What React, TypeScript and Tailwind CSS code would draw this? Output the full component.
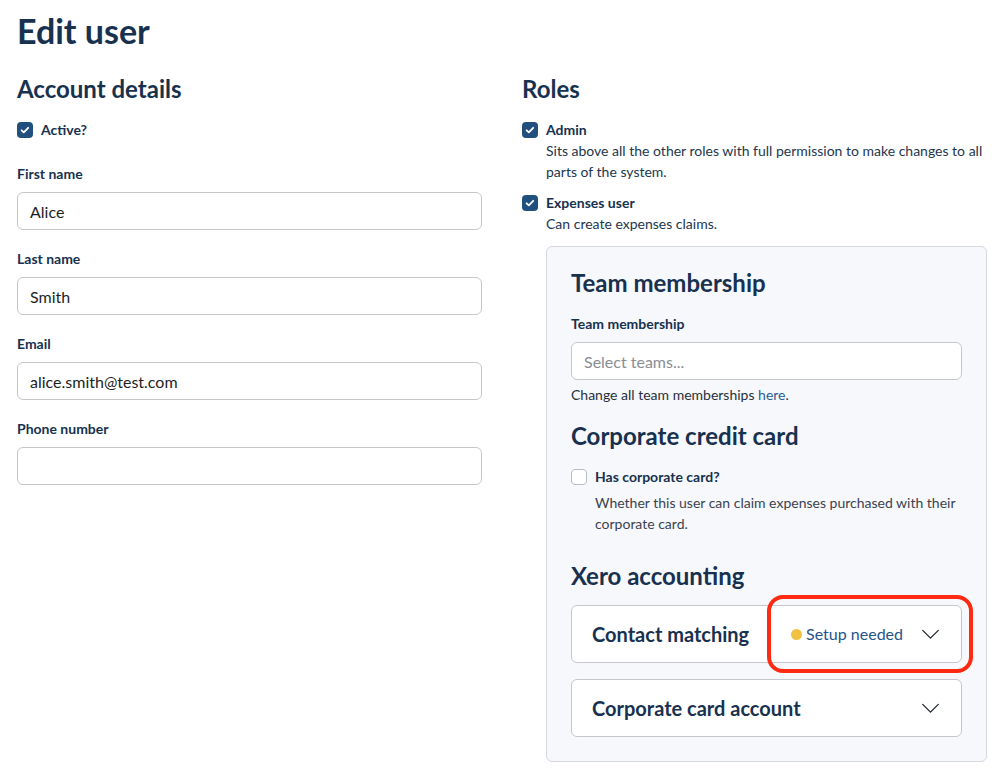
import React from "react";

function Check({ checked }: { checked: boolean }) {
  if (!checked) {
    return <span className="block h-4 w-4 shrink-0 rounded-[4px] border border-[#b9bcc2] bg-white" />;
  }
  return (
    <span className="flex h-4 w-4 shrink-0 items-center justify-center rounded-[4px] bg-[#22507e]">
      <svg viewBox="0 0 16 16" className="h-4 w-4" fill="none">
        <path d="M4.6 8.3l2.2 2.1 4.4-4.6" stroke="white" strokeWidth="1.8" strokeLinecap="round" strokeLinejoin="round" />
      </svg>
    </span>
  );
}

function Chevron() {
  return (
    <svg viewBox="0 0 20 12" className="h-[11px] w-[19px]" fill="none">
      <path d="M1.5 1.5l8.5 8.5 8.5-8.5" stroke="#1f2630" strokeWidth="1.4" strokeLinecap="round" strokeLinejoin="round" />
    </svg>
  );
}

function Field({ label, value }: { label: string; value?: string }) {
  return (
    <div>
      <label className="block text-[14px] font-bold leading-5 text-[#17314f]">{label}</label>
      <input
        defaultValue={value}
        className="mt-2 block h-[38px] w-full rounded-md border border-[#c5c7cb] bg-white px-3 text-[16px] text-[#1c1f24] outline-none"
      />
    </div>
  );
}

export default function App() {
  return (
    <div className="min-h-[776px] bg-white px-[17px] pt-[11px] text-[#17314f]" style={{ fontFamily: "Lato, 'Open Sans', sans-serif" }}>
      <h1 className="text-[34px] font-bold leading-10">Edit user</h1>
      <div className="mt-[23px] grid grid-cols-[465px_465px] gap-x-10">
        <div>
          <h2 className="text-[24px] font-bold leading-[30px]">Account details</h2>
          <label className="mt-[18px] flex items-center gap-2 text-[14px] font-bold leading-4">
            <Check checked />
            Active?
          </label>
          <div className="mt-[26px] flex flex-col gap-[19px]">
            <Field label="First name" value="Alice" />
            <Field label="Last name" value="Smith" />
            <Field label="Email" value="alice.smith@test.com" />
            <Field label="Phone number" />
          </div>
        </div>

        <div>
          <h2 className="text-[24px] font-bold leading-[30px]">Roles</h2>
          <div className="mt-4 flex gap-2">
            <span className="mt-[2px]"><Check checked /></span>
            <div>
              <div className="text-[14px] font-bold leading-5">Admin</div>
              <p className="text-[14px] leading-[21px] text-[#22364f]">
                Sits above all the other roles with full permission to make changes to all parts of the system.
              </p>
            </div>
          </div>
          <div className="mt-[11px] flex gap-2">
            <span className="mt-[2px]"><Check checked /></span>
            <div className="flex-1">
              <div className="text-[14px] font-bold leading-5">Expenses user</div>
              <p className="text-[14px] leading-[21px] text-[#22364f]">Can create expenses claims.</p>

              <div className="mt-3 rounded-md border border-[#d5d8de] bg-[#f7f8fc] px-6 pb-6 pt-[21px]">
                <h3 className="text-[24px] font-bold leading-[30px]">Team membership</h3>
                <label className="mt-4 block text-[14px] font-bold leading-5">Team membership</label>
                <input
                  placeholder="Select teams..."
                  className="mt-2 block h-[38px] w-full rounded-md border border-[#c5c7cb] bg-white px-3 text-[16px] outline-none placeholder:text-[#8a8d92]"
                />
                <p className="mt-[5px] text-[14px] leading-5 text-[#26303c]">
                  Change all team memberships <a className="text-[#2a5d92]">here</a>.
                </p>

                <h3 className="mt-4 text-[24px] font-bold leading-[30px]">Corporate credit card</h3>
                <div className="mt-4 flex gap-2">
                  <span className="mt-[2px]"><Check checked={false} /></span>
                  <div>
                    <div className="text-[14px] font-bold leading-5">Has corporate card?</div>
                    <p className="mt-[5px] text-[14px] leading-[21px] text-[#3a4350]">
                      Whether this user can claim expenses purchased with their corporate card.
                    </p>
                  </div>
                </div>

                <h3 className="mt-[27px] text-[24px] font-bold leading-[30px]">Xero accounting</h3>
                <div className="relative mt-[14px] flex h-[58px] items-center justify-between rounded-md border border-[#c5c7cb] bg-white pl-5 pr-[21px]">
                  <span className="text-[20px] font-bold">Contact matching</span>
                  <div className="flex items-center gap-[18px]">
                    <span className="flex items-center gap-1 text-[16px] text-[#24548a]">
                      <span className="h-[11px] w-[11px] rounded-full bg-[#f0c23f]" />
                      Setup needed
                    </span>
                    <Chevron />
                  </div>
                  <div className="pointer-events-none absolute right-[-12px] top-[-11px] h-[78px] w-[206px] rounded-[16px] border-4 border-[#ff2a12]" />
                </div>
                <div className="mt-[16px] flex h-[58px] items-center justify-between rounded-md border border-[#c5c7cb] bg-white pl-5 pr-[21px]">
                  <span className="text-[20px] font-bold">Corporate card account</span>
                  <Chevron />
                </div>
              </div>
            </div>
          </div>
        </div>
      </div>
    </div>
  );
}
